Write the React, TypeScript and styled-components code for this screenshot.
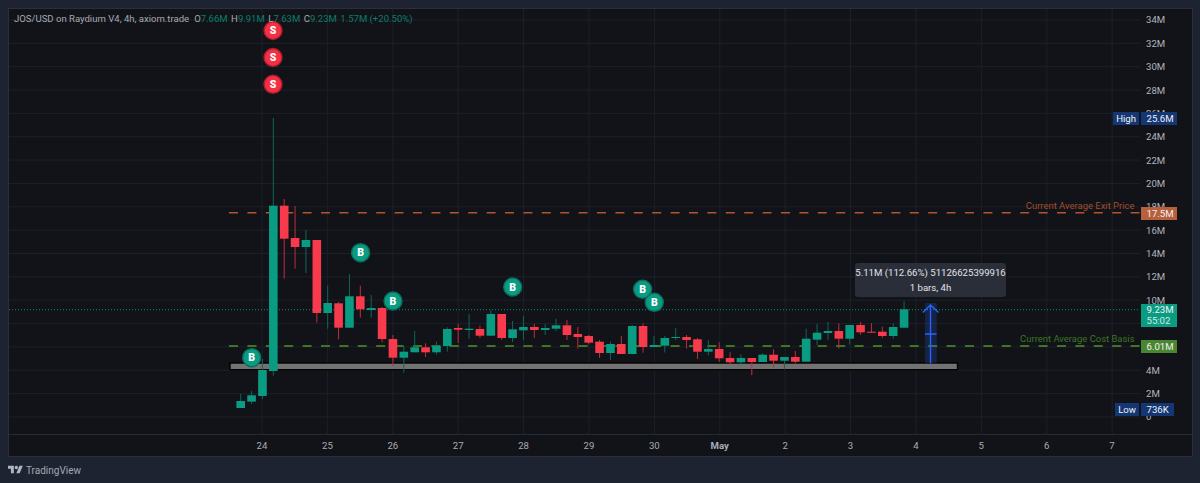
import styled, { createGlobalStyle } from 'styled-components';

const GREEN = '#0a9c82';
const RED = '#f73a4c';
const GREEN_WICK = '#0f6657';
const RED_WICK = '#c22c3c';

// top of body, bottom of body, high, low, is it up
type Candle = [number, number, number, number, boolean];

const candles: Candle[] = [
  [401, 408, 394, 408, true],
  [395.3, 401.6, 391, 404, true],
  [370, 396, 359, 399, true],
  [205.7, 371, 118, 375.7, true],
  [205.7, 238.7, 199, 278.7, false],
  [238, 247, 206, 268.7, false],
  [240, 247, 230, 273, true],
  [240, 313, 240, 322.7, false],
  [303, 313, 285.7, 328.7, true],
  [303.3, 327.7, 302, 339.3, false],
  [296.3, 327.7, 274, 327.7, true],
  [296.3, 309.3, 285.7, 317.7, false],
  [308, 310, 295, 317.7, true],
  [308, 339, 307, 342.3, false],
  [339, 357.7, 335, 366, false],
  [351.7, 357.7, 346, 372.7, true],
  [347.3, 352.3, 331, 352.3, true],
  [347.3, 352.3, 343.3, 357, false],
  [346, 352.3, 341.7, 354.7, true],
  [329, 346, 327.3, 351.7, true],
  [328, 329.7, 324, 343, false],
  [328.7, 330, 314, 338.7, true],
  [329, 335.7, 325.7, 338, false],
  [314, 335.7, 310.3, 335.7, true],
  [314, 338, 314, 340, false],
  [329.3, 338, 321, 342.3, true],
  [327, 330.3, 316, 340, true],
  [327, 330, 324, 338, false],
  [328, 330, 324, 335, true],
  [325.3, 328.7, 318.7, 331, true],
  [325.3, 335, 320, 340, false],
  [334, 337, 327, 348.7, false],
  [336, 342.7, 335, 344.3, false],
  [341.7, 353, 340, 358, false],
  [344, 353, 341.7, 360, true],
  [344, 354, 336, 354, false],
  [326, 354, 325, 354, true],
  [326, 347, 323.3, 352.7, false],
  [345, 347, 336, 347, true],
  [338, 345.7, 336, 352.5, true],
  [337, 338, 328, 340, true],
  [337, 340, 335, 348.7, false],
  [339.3, 351.7, 338, 359, false],
  [349, 351.7, 340, 355.3, true],
  [349, 358.3, 342.3, 362, false],
  [358, 362.3, 352.3, 364.3, false],
  [358, 362.3, 354.3, 364.3, true],
  [358, 362, 358, 375.3, false],
  [354.7, 362, 353.3, 362, true],
  [354.7, 360.7, 349.3, 367.7, false],
  [357, 360.7, 357, 369.7, true],
  [357, 361.7, 351, 363.3, false],
  [338.7, 361.7, 328.7, 361.7, true],
  [332.7, 339.7, 324, 345, true],
  [331, 333, 322, 340, true],
  [331, 338.7, 323.3, 348.7, false],
  [325, 338.7, 325, 344.7, true],
  [325, 332.3, 322, 334.7, false],
  [331.7, 332.7, 323.3, 332.7, false],
  [331.7, 336, 326.7, 337.7, false],
  [327, 336, 323.3, 338.7, true],
  [309.3, 327.7, 301, 327.7, true],
];

const buys = [
  [360.6, 252.7],
  [393, 301],
  [251.7, 357.7],
  [512.7, 287],
  [642.6, 289.3],
  [654.3, 302.3],
];
const sells = [30.5, 57.5, 84.3];

// 8M and 6M sit fully behind the last price and cost basis tags, so their cells stay empty
const priceTicks = ['34M', '32M', '30M', '28M', '26M', '24M', '22M', '20M', '18M', '16M', '14M', '12M', '10M', '', '', '4M', '2M', '0'];
const timeTicks = ['24', '25', '26', '27', '28', '29', '30', 'May', '2', '3', '4', '5', '6', '7'];

const App = () => {
  return (
    <>
      <GlobalStyle />
      <Frame>
        <Pane>
          <Plot viewBox="9 9 1131 425">
            {priceTicks.map((_, i) => (
              <GridLine key={i} x1={9} x2={1140} y1={20 + i * 23.35} y2={20 + i * 23.35} />
            ))}
            {timeTicks.map((_, i) => (
              <GridLine key={i} x1={262 + i * 65.4} x2={262 + i * 65.4} y1={9} y2={434} />
            ))}

            <line x1={9} x2={1140} y1={309.7} y2={309.7} stroke="#118a76" strokeDasharray="1 2" />
            <line x1={229} x2={1140} y1={212.7} y2={212.7} stroke="#b5532f" strokeWidth={1.4} strokeDasharray="9 9.4" />
            <line x1={229} x2={1140} y1={346} y2={346} stroke="#4f9429" strokeWidth={1.4} strokeDasharray="9 9.4" />

            <rect x={230} y={363} width={727.5} height={6.7} fill="#727272" stroke="#000" strokeWidth={1.4} />

            {candles.map(([top, bottom, high, low, up], i) => {
              const x = 240.7 + i * 10.875;
              return (
                <g key={i}>
                  <line x1={x} x2={x} y1={high} y2={low} stroke={up ? GREEN_WICK : RED_WICK} />
                  <rect x={x - 4.3} y={top} width={8.6} height={bottom - top} fill={up ? GREEN : RED} />
                </g>
              );
            })}

            <rect x={925} y={303} width={11.7} height={60} fill="#2962ff" fillOpacity={0.2} />
            <path d="M930.5 363.5V305.5M922.8 312.5L930.5 305L938.6 312.5M925 334H936.5" fill="none" stroke="#2962ff" strokeWidth={1.4} />

            {buys.map(([x, y], i) => (
              <g key={i}>
                <circle cx={x} cy={y} r={9} fill={GREEN} stroke="#0b6f5f" strokeWidth={1.4} />
                <MarkerText x={x} y={y + 3.7}>B</MarkerText>
              </g>
            ))}
            {sells.map((y, i) => (
              <g key={i}>
                <circle cx={273} cy={y} r={9} fill="#f42f43" stroke="#a81d2c" strokeWidth={1.4} />
                <MarkerText x={273} y={y + 3.7}>S</MarkerText>
              </g>
            ))}

            <LineLabel x={1134.5} y={208.5} fill="#a34c2c">Current Average Exit Price</LineLabel>
            <LineLabel x={1134.5} y={342} fill="#3d7426">Current Average Cost Basis</LineLabel>
          </Plot>

          <PriceAxis>
            {priceTicks.map((tick, i) => (
              <PriceTick key={i}>{tick}</PriceTick>
            ))}
          </PriceAxis>

          <Legend>
            <LegendTitle>JOS/USD on Raydium V4, 4h, axiom.trade</LegendTitle>
            <LegendItem>O<b>7.66M</b></LegendItem>
            <LegendItem>H<b>9.91M</b></LegendItem>
            <LegendItem>L<b>7.63M</b></LegendItem>
            <LegendItem>C<b>9.23M</b></LegendItem>
            <LegendItem><b>1.57M (+20.50%)</b></LegendItem>
          </Legend>

          <Measure>
            <div>5.11M (112.66%) 51126625399916</div>
            <div>1 bars, 4h</div>
          </Measure>

          <SideTag $top={103} $right={53}>High</SideTag>
          <PriceTag $top={103} $bg="#143672" $width={36.5}>25.6M</PriceTag>
          <PriceTag $top={197.7} $bg="#b85f3b" $width={36.5}>17.5M</PriceTag>
          <LastPrice>
            <span>9.23M</span>
            <small>55:02</small>
          </LastPrice>
          <PriceTag $top={331.3} $bg="#4a852f" $width={36.5}>6.01M</PriceTag>
          <SideTag $top={394.3} $right={53}>Low</SideTag>
          <PriceTag $top={394.3} $bg="#143672" $width={33}>736K</PriceTag>
        </Pane>

        <TimeAxis>
          {timeTicks.map((tick) => (
            <TimeTick key={tick} $bold={tick === 'May'}>{tick}</TimeTick>
          ))}
        </TimeAxis>
      </Frame>

      <Footer>
        <svg width="15" height="12" viewBox="0 0 36 28" fill="#b2b5be">
          <path d="M14 22H7V11H0V4h14v18zM28 22h-8l7.5-18h8L28 22z" />
          <circle cx="20" cy="8" r="4" />
        </svg>
        <FooterText>TradingView</FooterText>
      </Footer>
    </>
  );
};

export default App;

const GlobalStyle = createGlobalStyle`
  html, body {
    margin: 0;
    height: 100%;
    background: #1e2331;
    font-family: Roboto, 'Liberation Sans', sans-serif;
    overflow: hidden;
  }
`;

const Frame = styled.div`
  box-sizing: border-box;
  width: 1185px;
  height: 449px;
  margin: 8px 0 0 8px;
  border: 1px solid #2a2f3c;
  background: #111318;
  display: flex;
  flex-direction: column;
`;

const Pane = styled.div`
  position: relative;
  height: 425px;
  display: flex;
  border-bottom: 1px solid #262a33;
`;

const Plot = styled.svg`
  display: block;
  width: 1131px;
  height: 425px;
  flex: none;
`;

const GridLine = styled.line`
  stroke: #1d2027;
  stroke-width: 1;
`;

const MarkerText = styled.text`
  fill: #fff;
  font-size: 10.5px;
  font-weight: 900;
  text-anchor: middle;
`;

const LineLabel = styled.text`
  font-size: 9.45px;
  text-anchor: end;
`;

const PriceAxis = styled.div`
  flex: 1;
  display: flex;
  flex-direction: column;
  margin-top: -0.7px;
  padding-left: 6px;
`;

const PriceTick = styled.div`
  height: 23.35px;
  flex: none;
  display: flex;
  align-items: center;
  font-size: 9.6px;
  color: #b2b5be;
`;

const Legend = styled.div`
  position: absolute;
  top: 4px;
  left: 5px;
  display: flex;
  gap: 3.4px;
  font-size: 9.55px;
  line-height: 12px;
  color: #a6a9b2;
  white-space: nowrap;
`;

const LegendTitle = styled.span`
  margin-right: 1.6px;
`;

const LegendItem = styled.span`
  & > b {
    font-weight: 400;
    color: #0c7d6a;
  }
`;

const Measure = styled.div`
  position: absolute;
  left: 846px;
  top: 253.5px;
  box-sizing: border-box;
  width: 151px;
  height: 34px;
  background: #2a2e39;
  border-radius: 3px;
  color: #e2e3e8;
  font-size: 9.6px;
  line-height: 15px;
  text-align: center;
  white-space: nowrap;
  padding-top: 2px;
`;

const Tag = styled.div`
  position: absolute;
  box-sizing: border-box;
  height: 13px;
  display: flex;
  align-items: center;
  font-size: 9.6px;
  color: #f0f1f4;
`;

const PriceTag = styled(Tag)<{ $top: number; $bg: string; $width: number }>`
  left: 1131.5px;
  top: ${({ $top }) => $top}px;
  width: ${({ $width }) => $width}px;
  background: ${({ $bg }) => $bg};
  padding-left: 6px;
`;

const SideTag = styled(Tag)<{ $top: number; $right: number }>`
  right: ${({ $right }) => $right}px;
  top: ${({ $top }) => $top}px;
  background: #143672;
  padding: 0 3px;
`;

const LastPrice = styled.div`
  position: absolute;
  left: 1131.5px;
  top: 294.5px;
  box-sizing: border-box;
  width: 36.5px;
  height: 23.5px;
  background: #0a9c82;
  padding-left: 6px;
  display: flex;
  flex-direction: column;
  justify-content: center;
  font-size: 9.6px;
  line-height: 11px;
  color: #f0f1f4;

  & > small {
    font-size: 9.6px;
    color: #cfe9e3;
  }
`;

const TimeAxis = styled.div`
  height: 21px;
  display: flex;
  padding-left: 220.3px;
`;

const TimeTick = styled.div<{ $bold?: boolean }>`
  width: 65.4px;
  flex: none;
  display: flex;
  align-items: center;
  justify-content: center;
  font-size: 9.6px;
  font-weight: ${({ $bold }) => ($bold ? 700 : 400)};
  color: #a9acb5;
`;

const Footer = styled.div`
  height: 26px;
  padding-left: 8px;
  display: flex;
  align-items: center;
  gap: 3px;
`;

const FooterText = styled.span`
  font-size: 10px;
  color: #a4a8b3;
`;
